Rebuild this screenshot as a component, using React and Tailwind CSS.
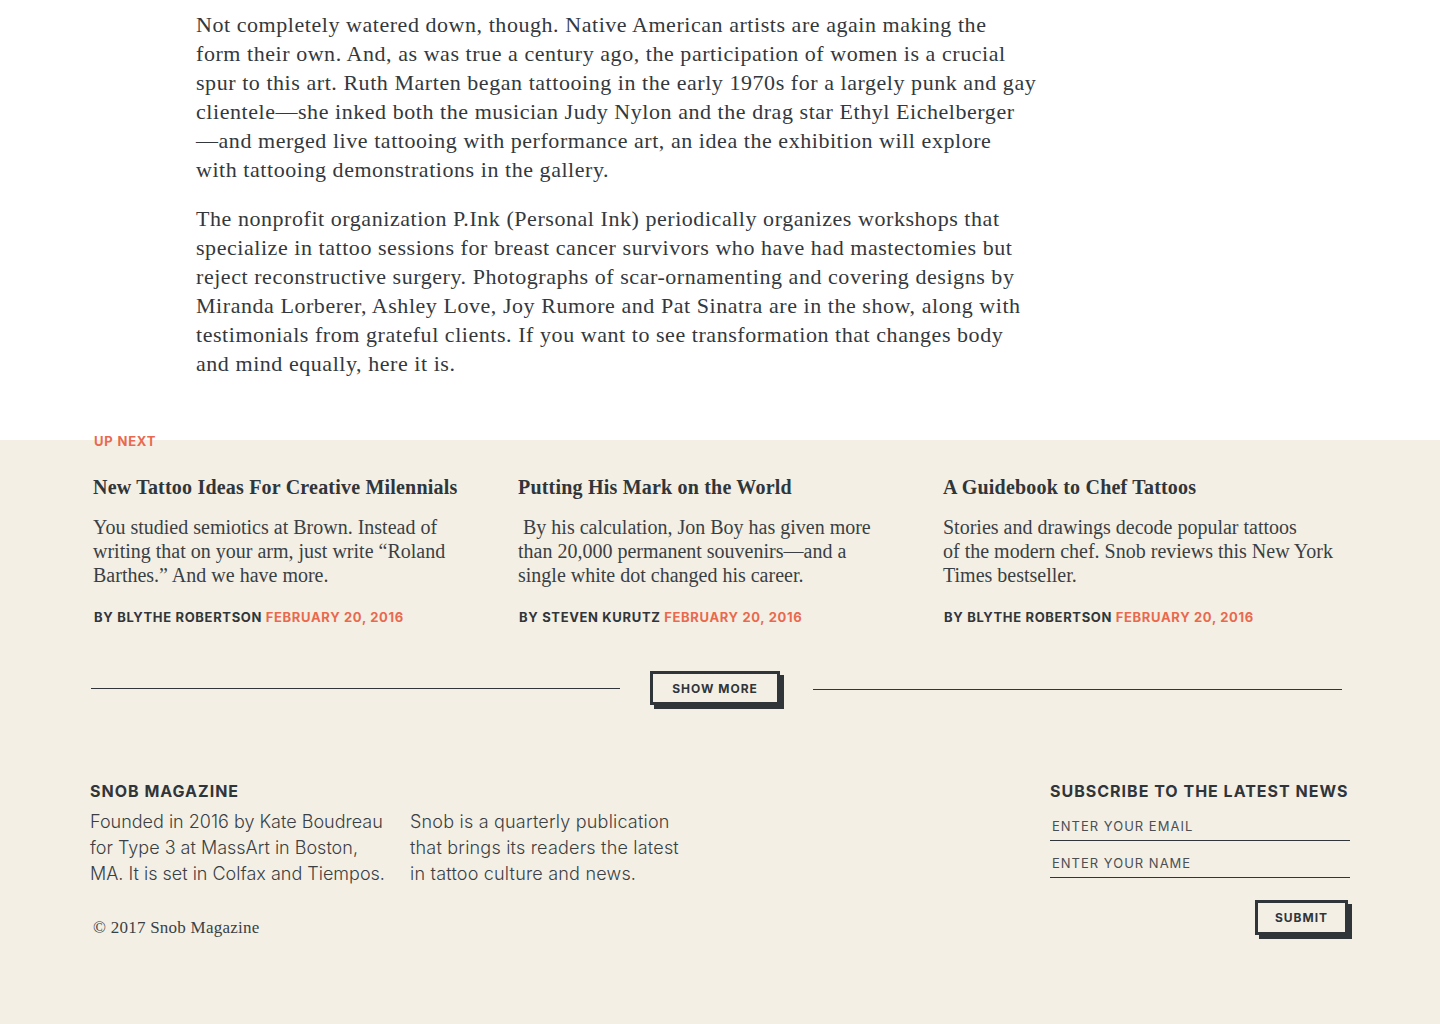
import React from "react";

const serif = "font-['Liberation_Serif',serif]";
const sans = "font-['Inter','Roboto',sans-serif]";

const paragraphs = [
  [
    "Not completely watered down, though. Native American artists are again making the",
    "form their own. And, as was true a century ago, the participation of women is a crucial",
    "spur to this art. Ruth Marten began tattooing in the early 1970s for a largely punk and gay",
    "clientele—she inked both the musician Judy Nylon and the drag star Ethyl Eichelberger",
    "—and merged live tattooing with performance art, an idea the exhibition will explore",
    "with tattooing demonstrations in the gallery.",
  ],
  [
    "The nonprofit organization P.Ink (Personal Ink) periodically organizes workshops that",
    "specialize in tattoo sessions for breast cancer survivors who have had mastectomies but",
    "reject reconstructive surgery. Photographs of scar-ornamenting and covering designs by",
    "Miranda Lorberer, Ashley Love, Joy Rumore and Pat Sinatra are in the show, along with",
    "testimonials from grateful clients. If you want to see transformation that changes body",
    "and mind equally, here it is.",
  ],
];

const stories = [
  {
    title: "New Tattoo Ideas For Creative Milennials",
    blurb: ["You studied semiotics at Brown. Instead of", "writing that on your arm, just write “Roland", "Barthes.” And we have more."],
    author: "Blythe Robertson",
  },
  {
    title: "Putting His Mark on the World",
    blurb: ["\u00a0By his calculation, Jon Boy has given more", "than 20,000 permanent souvenirs—and a", "single white dot changed his career."],
    author: "Steven Kurutz",
  },
  {
    title: "A Guidebook to Chef Tattoos",
    blurb: ["Stories and drawings decode popular tattoos", "of the modern chef. Snob reviews this New York", "Times bestseller."],
    author: "Blythe Robertson",
  },
];

const Lines = ({ lines }) =>
  lines.map((line, i) => (
    <React.Fragment key={i}>
      {line}
      {i < lines.length - 1 && <br />}
    </React.Fragment>
  ));

const StoryCard = ({ story }) => (
  <div className="flex flex-col">
    <h3 className={`${serif} text-[20px] leading-[24px] font-bold tracking-[0.2px] text-[#30353a]`}>{story.title}</h3>
    <p className={`${serif} mt-4 text-[20px] leading-[24px] text-[#3a3f44] whitespace-nowrap`}>
      <Lines lines={story.blurb} />
    </p>
    <div className={`${sans} mt-[22px] pl-px text-[13px] leading-4 font-bold uppercase tracking-[0.65px]`}>
      <span className="text-[#30353a]">By {story.author}</span>{" "}
      <span className="text-[#e9694f]">February 20, 2016</span>
    </div>
  </div>
);

const ShadowButton = ({ children, className = "" }) => (
  <button
    className={`${sans} border-[3px] border-[#30353a] bg-[#f3efe4] text-[#30353a] font-bold uppercase tracking-[1px] text-[12px] shadow-[4px_4px_0_0_#30353a] ${className}`}
  >
    {children}
  </button>
);

export default function App() {
  return (
    <div className="min-h-[1024px] flex flex-col bg-[#f3efe4]">
      <article className="bg-white pt-[10px] pb-[62px]">
        <div className={`${serif} ml-[196px] w-[850px] text-[22px] leading-[29px] tracking-[0.55px] text-[#33383d] flex flex-col gap-5 whitespace-nowrap`}>
          {paragraphs.map((p, i) => (
            <p key={i}>
              <Lines lines={p} />
            </p>
          ))}
        </div>
      </article>

      <section className="px-[90px] flex-1">
        <div className={`${sans} -mt-[7px] pl-[4px] text-[13px] leading-4 font-bold uppercase tracking-[0.8px] text-[#e9694f]`}>
          Up Next
        </div>
        <div className="mt-[26px] pl-[3px] grid grid-cols-[400px_400px_400px] gap-x-[25px]">
          {stories.map((s) => (
            <StoryCard key={s.title} story={s} />
          ))}
        </div>

        <div className="mt-[46px] flex items-center">
          <div className="ml-[1px] w-[529px] h-px bg-[#30353a]" />
          <ShadowButton className="ml-[30px] w-[130px] h-[34px] pt-px">Show More</ShadowButton>
          <div className="ml-[33px] mt-[2px] w-[529px] h-px bg-[#30353a]" />
        </div>

        <footer className="mt-[76px] flex justify-between">
          <div className="flex flex-col">
            <h4 className={`${sans} text-[16px] leading-5 font-bold uppercase tracking-[1px] text-[#30353a]`}>
              Snob Magazine
            </h4>
            <div className={`${sans} mt-[8px] flex gap-[20px] text-[18px] leading-[26px] font-light text-[#3a3f44]`}>
              <p className="w-[300px]">
                Founded in 2016 by Kate Boudreau for Type 3 at MassArt in Boston, MA. It is set in Colfax and Tiempos.
              </p>
              <p className="w-[280px] tracking-[0.2px]">
                Snob is a quarterly publication that brings its readers the latest in tattoo culture and news.
              </p>
            </div>
            <p className={`${serif} mt-[31px] ml-[3px] text-[17px] leading-5 tracking-[0.25px] text-[#3a3f44]`}>
              © 2017 Snob Magazine
            </p>
          </div>

          <form className="w-[300px] flex flex-col">
            <h4 className={`${sans} text-[16px] leading-5 font-bold uppercase tracking-[1px] text-[#30353a] whitespace-nowrap`}>
              Subscribe to the latest news
            </h4>
            <input
              placeholder="ENTER YOUR EMAIL"
              className={`${sans} mt-[6px] w-full bg-transparent border-b-[1.5px] border-[#30353a] px-[2px] pt-[11px] pb-[6px] text-[13px] leading-4 tracking-[1px] placeholder:text-[#4a4f54] outline-none`}
            />
            <input
              placeholder="ENTER YOUR NAME"
              className={`${sans} w-full bg-transparent border-b-[1.5px] border-[#30353a] px-[2px] pt-[14px] pb-[6px] text-[13px] leading-4 tracking-[1px] placeholder:text-[#4a4f54] outline-none`}
            />
            <div className="mt-[22px] flex justify-end pr-[2px]">
              <ShadowButton className="w-[93px] h-[35px]">Submit</ShadowButton>
            </div>
          </form>
        </footer>
      </section>
    </div>
  );
}
